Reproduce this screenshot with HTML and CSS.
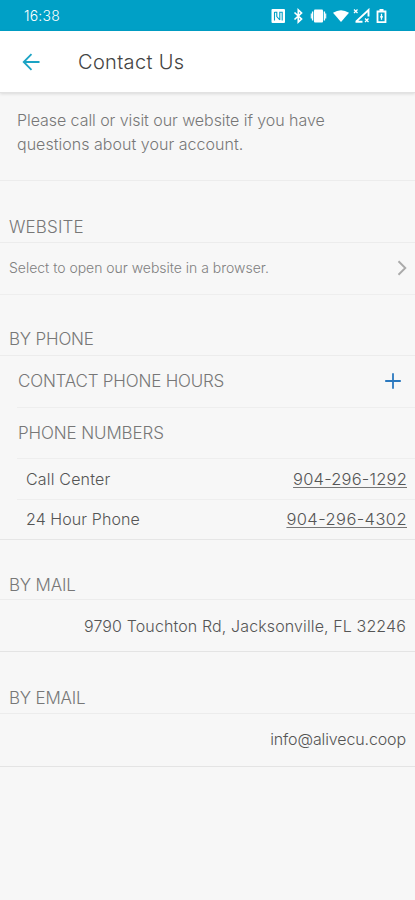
FILE: index.html
```html
<!DOCTYPE html>
<html lang="en">
<head>
    <meta charset="UTF-8">
    <meta name="viewport" content="width=device-width, initial-scale=1.0">
    <title>Contact Us</title>
    <link rel="stylesheet" href="styles.css">
</head>
<body>
    <div class="status-bar">
        <span class="clock">16:38</span>
        <svg class="status-icons" width="118" height="16" viewBox="0 0 118 16" fill="#fff">
            <!-- nfc -->
            <rect x="1.5" y="1" width="13.5" height="14" rx="1"/>
            <path d="M4.500 4v8.500M4.500 4.200h2.300v4.300l3 3.500M9.800 12V4.200h2.400v8.300" fill="none" stroke="#00a0c6" stroke-width="1.100"/>
            <!-- bluetooth -->
            <path d="M24.500 4.500l7 6.500-3.200 3V2l3.200 3-7 6.500" fill="none" stroke="#fff" stroke-width="1.700"/>
            <!-- vibrate -->
            <rect x="44" y="1.500" width="9" height="13" rx="1"/>
            <path d="M42.600 3.500v9M54.400 3.500v9" stroke="#fff" stroke-width="1.400"/>
            <path d="M41.300 5.500v5M55.700 5.500v5" stroke="#fff" stroke-width="1.100"/>
            <!-- wifi -->
            <path d="M63 4.800Q71 -.4 79 4.800L71 14z"/>
            <!-- no signal -->
            <path d="M86 13.600L98.500 2V8.500M85.500 13.800h7" fill="none" stroke="#fff" stroke-width="1.900"/>
            <path d="M84 1.500l3.500 3.500M87.500 1.500L84 5M95 10.500l3.500 3.500M98.500 10.500L95 14" stroke="#fff" stroke-width="1.300"/>
            <!-- battery -->
            <path d="M107.500 3.500h8v10.700h-8zM109.500 2h4" fill="none" stroke="#fff" stroke-width="1.800"/>
            <path d="M111.500 5.800v6M110 8.800h3" stroke="#fff" stroke-width="1.300"/>
        </svg>
    </div>
    <header class="app-bar">
        <svg class="back" width="20" height="20" viewBox="0 0 20 20">
            <path d="M18.500 10H2.500M10.500 2.200L2.700 10l7.800 7.800" fill="none" stroke="#1ba3c4" stroke-width="1.800"/>
        </svg>
        <h1>Contact Us</h1>
    </header>
    <main>
        <div class="intro">
            <p>Please call or visit our website if you have</p>
            <p class="question">questions about your account.</p>
        </div>

        <h2 class="website-title">WEBSITE</h2>
        <a class="row website">
            <span>Select to open our website in a browser.</span>
            <svg class="chevron" width="10" height="16" viewBox="0 0 10 16">
                <path d="M1.500 1.300L8.300 8l-6.800 6.700" fill="none" stroke="#aaa" stroke-width="1.900"/>
            </svg>
        </a>

        <h2 class="phone-title">BY PHONE</h2>
        <div class="phone">
            <div class="group hours">
                <h3>CONTACT PHONE HOURS</h3>
                <svg class="plus" width="16" height="16" viewBox="0 0 16 16">
                    <path d="M8 .2v15.600M.2 8h15.600" stroke="#2a78be" stroke-width="1.800"/>
                </svg>
            </div>
            <div class="group numbers"><h3>PHONE NUMBERS</h3></div>
            <div class="number">
                <span class="center">Call Center</span>
                <a>904-296-1292</a>
            </div>
            <div class="number">
                <span>24 Hour Phone</span>
                <a class="day">904-296-4302</a>
            </div>
        </div>

        <h2 class="mail-title">BY MAIL</h2>
        <div class="row end address">9790 Touchton Rd, Jacksonville, FL 32246</div>

        <h2 class="email-title">BY EMAIL</h2>
        <div class="row end email">info@alivecu.coop</div>
    </main>
</body>
</html>
```
FILE: styles.css
```css
* {
    box-sizing: border-box;
}
body {
    margin: 0;
    min-height: 900px;
    background-color: #f7f7f7;
    color: #555;
    font-family: Inter, "Liberation Sans", sans-serif;
    font-weight: 300;
    font-size: 16px;
    line-height: 24px;
}
h1, h2, h3, p {
    margin: 0;
    font-weight: 300;
}
.status-bar {
    display: flex;
    justify-content: space-between;
    align-items: center;
    height: 31px;
    padding: 1px 27px 0 24px;
    background-color: #00a0c6;
    color: #fff;
}
.clock {
    font-size: 14px;
    letter-spacing: 0.2px;
}
.app-bar {
    display: flex;
    align-items: center;
    height: 62px;
    padding-left: 21px;
    background-color: #fff;
    border-bottom: 1px solid #e2e2e2;
    box-shadow: 0 1px 3px rgba(0, 0, 0, 0.12);
}
h1 {
    margin-left: 37px;
    color: #444;
    font-size: 20px;
    letter-spacing: 0.33px;
}
.intro {
    height: 88px;
    padding: 15px 17px 0;
    border-bottom: 1px solid #ececec;
    color: #777;
    letter-spacing: -0.06px;
}
.question {
    letter-spacing: 0.03px;
}
h2 {
    height: 61px;
    padding: 33px 9px 0;
    border-bottom: 1px solid #ececec;
    color: #777;
    font-size: 17px;
    letter-spacing: -0.2px;
}
.website-title {
    height: 62px;
    padding-top: 34px;
    letter-spacing: 0.15px;
}
.phone-title {
    padding-top: 32px;
}
.mail-title {
    height: 60px;
}
.email-title {
    height: 62px;
    padding-top: 34px;
}
.row {
    display: flex;
    justify-content: space-between;
    align-items: center;
    height: 52px;
    padding: 0 9px 2px;
    border-bottom: 1px solid #eee;
}
.website {
    color: #808080;
    font-size: 14px;
    letter-spacing: -0.02px;
}
.chevron {
    margin-right: -1px;
}
.end {
    justify-content: flex-end;
    padding-bottom: 0;
    border-bottom-color: #e4e4e4;
}
.address {
    letter-spacing: 0.12px;
}
.email {
    height: 53px;
    padding-bottom: 2px;
    letter-spacing: -0.12px;
}
.phone {
    border-bottom: 1px solid #e6e6e6;
}
.group {
    display: flex;
    align-items: center;
    justify-content: space-between;
    height: 52px;
    margin-left: 17px;
    padding: 0 14px 2px 1px;
    border-bottom: 1px solid #eee;
}
h3 {
    color: #777;
    font-size: 17px;
    letter-spacing: -0.2px;
}
.numbers {
    height: 51px;
    padding-bottom: 0;
}
.numbers h3 {
    letter-spacing: -0.12px;
}
.number {
    display: flex;
    align-items: center;
    justify-content: space-between;
    height: 40px;
    margin-left: 17px;
    padding: 0 8px 0 9px;
}
.number + .number {
    padding-bottom: 1px;
    border-top: 1px solid #eee;
}
.number span {
    letter-spacing: 0.08px;
}
.number .center {
    letter-spacing: 0.18px;
}
.number a {
    font-size: 16.5px;
    letter-spacing: 0.2px;
    text-decoration: underline;
    text-decoration-color: #777;
    text-underline-offset: 2px;
}
.number .day {
    letter-spacing: 0.42px;
}
```
